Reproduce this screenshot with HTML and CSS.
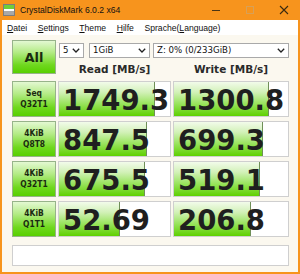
FILE: index.html
```html
<!DOCTYPE html>
<html lang="de">
<head>
    <meta charset="UTF-8">
    <title>CrystalDiskMark 6.0.2 x64</title>
    <link rel="stylesheet" href="styles.css">
</head>
<body>
    <div class="window">
        <div class="title-bar">
            <svg class="app-icon" width="12" height="12" viewBox="0 0 12 12">
                <rect x="0.5" y="0.5" width="11" height="11" fill="#b9b9b9" stroke="#7d7d7d"/>
                <rect x="1" y="1" width="10" height="4" fill="#6fcf3a"/>
                <rect x="1" y="5" width="10" height="2" fill="#ffffff"/>
                <rect x="1" y="7" width="10" height="4" fill="#a8a8a8"/>
            </svg>
            <span class="title">CrystalDiskMark 6.0.2 x64</span>
            <div class="title-buttons">
                <svg width="10" height="10" viewBox="0 0 10 10"><line x1="1" y1="5.5" x2="9" y2="5.5" stroke="#4a3515" stroke-width="1"/></svg>
                <svg width="10" height="10" viewBox="0 0 10 10"><rect x="1.5" y="1.5" width="7" height="7" fill="none" stroke="#d9a055" stroke-width="1"/></svg>
                <svg width="10" height="10" viewBox="0 0 10 10"><path d="M1 1 L9 9 M9 1 L1 9" stroke="#3a2a10" stroke-width="1.1"/></svg>
            </div>
        </div>

        <div class="menu-bar">
            <span class="menu-item"><u>D</u>atei</span>
            <span class="menu-item"><u>S</u>ettings</span>
            <span class="menu-item"><u>T</u>heme</span>
            <span class="menu-item"><u>H</u>ilfe</span>
            <span class="menu-item">Sprache(<u>L</u>anguage)</span>
        </div>

        <div class="content">
            <div class="bench">
                <div class="btn btn-all">All</div>
                <div class="top-controls">
                    <div class="selects">
                        <div class="select sel-count">5<svg class="chev" width="8" height="5" viewBox="0 0 8 5"><path d="M0.8 0.8 L4 4 L7.2 0.8" fill="none" stroke="#222" stroke-width="1.3"/></svg></div>
                        <div class="select sel-size">1GiB<svg class="chev" width="8" height="5" viewBox="0 0 8 5"><path d="M0.8 0.8 L4 4 L7.2 0.8" fill="none" stroke="#222" stroke-width="1.3"/></svg></div>
                        <div class="select sel-drive">Z: 0% (0/233GiB)<svg class="chev" width="8" height="5" viewBox="0 0 8 5"><path d="M0.8 0.8 L4 4 L7.2 0.8" fill="none" stroke="#222" stroke-width="1.3"/></svg></div>
                    </div>
                    <div class="headers">
                        <span>Read [MB/s]</span>
                        <span>Write [MB/s]</span>
                    </div>
                </div>

                <div class="btn btn-test">Seq<br>Q32T1</div>
                <div class="value"><div class="meter" style="width: 96px"></div><span>1749.3</span></div>
                <div class="value"><div class="meter" style="width: 95px"></div><span>1300.8</span></div>

                <div class="btn btn-test">4KiB<br>Q8T8</div>
                <div class="value"><div class="meter" style="width: 88px"></div><span>847.5</span></div>
                <div class="value"><div class="meter" style="width: 89px"></div><span>699.3</span></div>

                <div class="btn btn-test">4KiB<br>Q32T1</div>
                <div class="value"><div class="meter" style="width: 86px"></div><span>675.5</span></div>
                <div class="value"><div class="meter" style="width: 86px"></div><span>519.1</span></div>

                <div class="btn btn-test">4KiB<br>Q1T1</div>
                <div class="value"><div class="meter" style="width: 61px"></div><span>52.69</span></div>
                <div class="value"><div class="meter" style="width: 77px"></div><span>206.8</span></div>
            </div>

            <div class="comment"></div>
        </div>
    </div>
</body>
</html>
```

FILE: styles.css
```css
html, body {
    margin: 0;
    padding: 0;
}

body {
    width: 300px;
    height: 274px;
    overflow: hidden;
    font-family: 'Liberation Sans', Arial, sans-serif;
    color: #111;
}

.window {
    box-sizing: border-box;
    width: 300px;
    height: 274px;
    background-color: #f7941d; /* orange accent frame */
    padding: 0 2px 2px 2px;
    display: flex;
    flex-direction: column;
}

.title-bar {
    height: 20px;
    display: flex;
    align-items: center;
    padding-left: 1px;
}

.app-icon {
    margin-right: 5px;
}

.title {
    font-size: 8.6px;
    color: #111;
    flex-grow: 1;
}

.title-buttons {
    display: flex;
    align-items: center;
}

.title-buttons svg {
    margin-left: 24px;
}

.title-buttons svg:first-child {
    margin-left: 0;
}

.title-buttons svg:last-child {
    margin-right: 9px;
}

.menu-bar {
    height: 15px;
    background-color: #ffffff;
    display: flex;
    align-items: center;
    padding-left: 0;
    font-size: 8.6px;
}

.menu-item {
    padding: 0 5px;
}

.menu-item + .menu-item {
    margin-left: 0.6px;
}

.content {
    flex-grow: 1;
    background-color: #fbf8ef; /* cream window body */
    padding: 5px 9px 6px 10px;
}

.bench {
    display: grid;
    grid-template-columns: 44px 113px 116px;
    grid-template-rows: 37px repeat(4, 36px);
    column-gap: 2px;
    row-gap: 4px;
}

.btn {
    box-sizing: border-box;
    border: 1px solid #97b38a;
    background: linear-gradient(to bottom, #e3f8d2 0%, #b4eb86 35%, #6fd81e 75%, #58cf00 100%);
    display: flex;
    align-items: center;
    justify-content: center;
    text-align: center;
    color: #1b2a10;
    font-family: 'DejaVu Sans', sans-serif;
    font-weight: bold;
}

.btn-all {
    height: 34px;
    font-size: 13px;
}

.btn-test {
    font-size: 8.4px;
    line-height: 11px;
    font-stretch: condensed;
}

.top-controls {
    grid-column: 2 / 4;
    display: flex;
    flex-direction: column;
}

.selects {
    display: flex;
    margin-top: 3px;
    margin-left: 1px;
    gap: 5px;
}

.select {
    box-sizing: border-box;
    height: 15px;
    background-color: #ffffff;
    border: 1px solid #a9a9a9;
    font-family: 'DejaVu Sans', sans-serif;
    font-size: 8.6px;
    line-height: 13px;
    padding-left: 3px;
    position: relative;
}

.chev {
    position: absolute;
    right: 3px;
    top: 4px;
}

.sel-count {
    width: 25px;
}

.sel-size {
    width: 61px;
    margin-right: -2px;
}

.sel-drive {
    width: 136px;
}

.headers {
    display: grid;
    grid-template-columns: 113px 116px;
    column-gap: 2px;
    margin-top: 5px;
    font-family: 'DejaVu Sans', sans-serif;
    font-weight: bold;
    font-size: 10.5px;
    color: #2a2a2a;
    text-align: center;
}

.value {
    box-sizing: border-box;
    position: relative;
    background-color: #ffffff;
    border: 1px solid #cfcfcf;
    overflow: hidden;
}

.meter {
    position: absolute;
    left: 0;
    top: 0;
    bottom: 0;
    box-sizing: border-box;
    background: linear-gradient(to bottom, #f2fbea 0%, #d2f1b8 30%, #97e35a 65%, #5fd000 100%);
    border-right: 1px solid #6f8f58;
}

.value span {
    position: relative;
    display: block;
    padding: 2px 0 0 4px;
    font-family: 'DejaVu Sans', sans-serif;
    font-weight: bold;
    font-size: 27.5px;
    line-height: 32px;
    color: #1f1f1f;
    white-space: nowrap;
}

.comment {
    box-sizing: border-box;
    margin-top: 8px;
    width: 277px;
    height: 21px;
    background-color: #ffffff;
    border: 1px solid #cfcfcf;
}
```
